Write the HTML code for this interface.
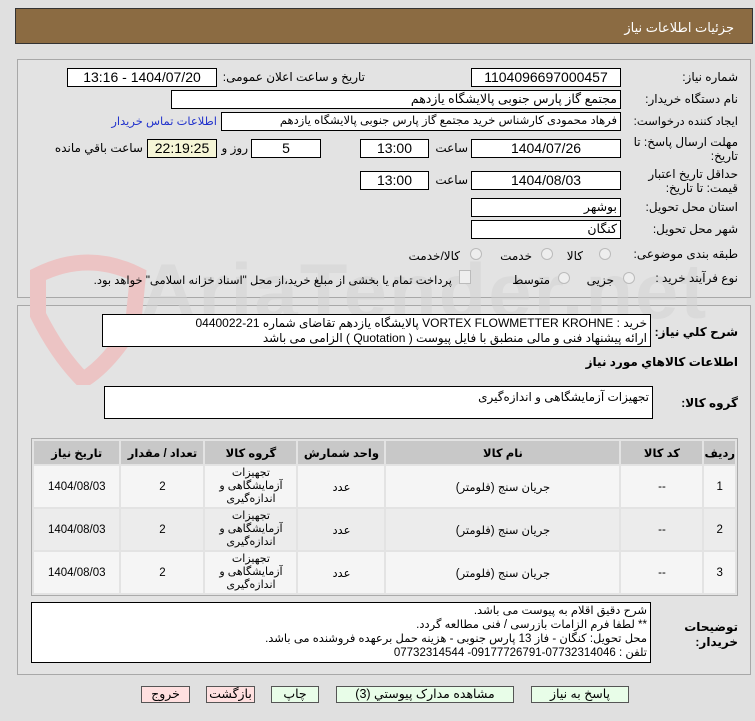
<!DOCTYPE html>
<html><head><meta charset="utf-8">
<style>
*{box-sizing:border-box;margin:0;padding:0}
body{width:755px;height:721px;background:#e0e0e0;font-family:"Liberation Sans","Noto Sans CJK SC","DejaVu Sans",sans-serif;font-size:12px;color:#000;position:relative;overflow:hidden;direction:rtl}
.a{position:absolute;white-space:nowrap}
.hdr{left:15px;top:8px;width:738px;height:36px;background:#8b6b42;border:1px solid #333;color:#fff;font-size:13px;padding:11px 18px 0 0}
.pan{border:1px solid #a8a8a8;background:#e3e3e3}
.f{background:#fff;border:1px solid #000;height:19px;line-height:17px;padding:0 3px;font-size:12.5px}
.n{font-size:14px}
.c{text-align:center}
.lb{font-size:12px}
.rad{width:12px;height:12px;border:1px solid #bbb;border-radius:50%;background:#eee}
table{border-collapse:separate;border-spacing:2px;font-size:11.5px}
td,th{text-align:center}
th{background:#c8c8c8;height:23px;font-weight:bold}
td{background:#f5f5f5}
tr.e td{background:#ececec}
.btn{border:1px solid #555;height:17px;line-height:15px;text-align:center;font-size:12.5px}
.g{background:#e8fde8}.r{background:#ffe0e0}
</style></head><body>
<div class="a hdr">جزئیات اطلاعات نیاز</div>
<div class="a pan" style="left:17px;top:59px;width:734px;height:239px"></div>
<div class="a pan" style="left:17px;top:305px;width:734px;height:370px"></div>
<svg class="a" style="left:18px;top:245px" width="140" height="140" viewBox="0 0 140 140"><path d="M20 30 Q70 5 120 30 L115 80 Q90 120 65 135 Q40 110 20 70 Z" fill="none" stroke="#ecc4c4" stroke-width="16"/></svg>
<div class="a" style="left:140px;top:246px;font-size:78px;font-weight:bold;color:#d2d2d2;direction:ltr;letter-spacing:2px;opacity:.5">AriaTender.net</div>

<div class="a lb" style="right:17px;top:70px">شماره نیاز:</div>
<div class="a f c n" style="left:471px;top:68px;width:150px">1104096697000457</div>
<div class="a lb" style="right:390px;top:70px">تاریخ و ساعت اعلان عمومی:</div>
<div class="a f c n" style="left:67px;top:68px;width:150px">1404/07/20 - 13:16</div>

<div class="a lb" style="right:17px;top:92px">نام دستگاه خریدار:</div>
<div class="a f" style="left:171px;top:90px;width:450px">مجتمع گاز پارس جنوبی  پالایشگاه یازدهم</div>

<div class="a lb" style="right:17px;top:114px;font-size:11.5px">ایجاد کننده درخواست:</div>
<div class="a f" style="left:221px;top:112px;width:400px;font-size:11.5px;overflow:hidden">فرهاد محمودی کارشناس خرید مجتمع گاز پارس جنوبی  پالایشگاه یازدهم</div>
<div class="a lb" style="right:538px;top:114px;color:#2233cc;font-size:11.5px">اطلاعات تماس خریدار</div>

<div class="a lb" style="right:17px;top:135px;line-height:14px;white-space:normal;width:112px">مهلت ارسال پاسخ: تا تاریخ:</div>
<div class="a f c n" style="left:471px;top:139px;width:150px">1404/07/26</div>
<div class="a lb" style="right:287px;top:141px">ساعت</div>
<div class="a f c n" style="left:360px;top:139px;width:69px">13:00</div>
<div class="a f c n" style="left:251px;top:139px;width:70px">5</div>
<div class="a lb" style="right:507px;top:141px">روز و</div>
<div class="a f c n" style="left:147px;top:139px;width:70px;background:#f5f5d6">22:19:25</div>
<div class="a lb" style="right:612px;top:141px">ساعت باقي مانده</div>

<div class="a lb" style="right:17px;top:167px;line-height:14px;white-space:normal;width:100px">حداقل تاریخ اعتبار قیمت: تا تاریخ:</div>
<div class="a f c n" style="left:471px;top:171px;width:150px">1404/08/03</div>
<div class="a lb" style="right:287px;top:173px">ساعت</div>
<div class="a f c n" style="left:360px;top:171px;width:69px">13:00</div>

<div class="a lb" style="right:17px;top:200px">استان محل تحویل:</div>
<div class="a f" style="left:471px;top:198px;width:150px">بوشهر</div>
<div class="a lb" style="right:17px;top:222px">شهر محل تحویل:</div>
<div class="a f" style="left:471px;top:220px;width:150px">کنگان</div>

<div class="a lb" style="right:17px;top:247px">طبقه بندی موضوعی:</div>
<div class="a rad" style="left:599px;top:248px"></div><div class="a lb" style="right:172px;top:249px">کالا</div>
<div class="a rad" style="left:541px;top:248px"></div><div class="a lb" style="right:223px;top:249px">خدمت</div>
<div class="a rad" style="left:470px;top:248px"></div><div class="a lb" style="right:295px;top:249px">کالا/خدمت</div>

<div class="a lb" style="right:17px;top:271px">نوع فرآیند خرید :</div>
<div class="a rad" style="left:623px;top:272px"></div><div class="a lb" style="right:141px;top:273px">جزیی</div>
<div class="a rad" style="left:558px;top:272px"></div><div class="a lb" style="right:205px;top:273px">متوسط</div>
<div class="a" style="left:459px;top:270px;width:12px;height:14px;border:1px solid #bbb;background:#eee"></div>
<div class="a lb" style="right:303px;top:273px;font-size:11.5px">پرداخت تمام یا بخشی از مبلغ خرید،از محل "اسناد خزانه اسلامی" خواهد بود.</div>

<div class="a lb" style="right:17px;top:325px;font-weight:bold">شرح کلي نیاز:</div>
<div class="a f" style="left:102px;top:314px;width:549px;height:33px;line-height:15px;padding-top:1px;font-size:12px;overflow:hidden">خرید : VORTEX FLOWMETTER KROHNE  پالایشگاه یازدهم تقاضای شماره 21-0440022<br>ارائه پیشنهاد فنی و مالی منطبق با فایل پیوست ( Quotation ) الزامی می باشد</div>
<div class="a lb" style="right:17px;top:355px;font-weight:bold">اطلاعات کالاهاي مورد نیاز</div>
<div class="a lb" style="right:17px;top:396px;font-weight:bold">گروه کالا:</div>
<div class="a f" style="left:104px;top:386px;width:549px;height:33px;font-size:12px;padding-top:2px">تجهیزات آزمایشگاهی و اندازه‌گیری</div>

<div class="a" style="left:31px;top:438px;width:707px;height:158px;border:1px solid #aaa;background:#e3e3e3">
<table style="width:705px">
<tr><th style="width:26px">ردیف</th><th style="width:81px">کد کالا</th><th style="width:233px">نام کالا</th><th style="width:86px">واحد شمارش</th><th style="width:91px">گروه کالا</th><th style="width:82px">تعداد / مقدار</th><th>تاریخ نیاز</th></tr>
<tr style="height:41px"><td>1</td><td>--</td><td>جریان سنج (فلومتر)</td><td>عدد</td><td style="line-height:13px;font-size:11px">تجهیزات<br>آزمایشگاهی و<br>اندازه‌گیری</td><td>2</td><td>1404/08/03</td></tr>
<tr class="e" style="height:41px"><td>2</td><td>--</td><td>جریان سنج (فلومتر)</td><td>عدد</td><td style="line-height:13px;font-size:11px">تجهیزات<br>آزمایشگاهی و<br>اندازه‌گیری</td><td>2</td><td>1404/08/03</td></tr>
<tr style="height:41px"><td>3</td><td>--</td><td>جریان سنج (فلومتر)</td><td>عدد</td><td style="line-height:13px;font-size:11px">تجهیزات<br>آزمایشگاهی و<br>اندازه‌گیری</td><td>2</td><td>1404/08/03</td></tr>
</table></div>

<div class="a lb" style="right:17px;top:620px;font-weight:bold;line-height:15px">توضیحات<br>خریدار:</div>
<div class="a f" style="left:31px;top:602px;width:620px;height:61px;line-height:14px;font-size:11.5px;padding-top:1px">شرح دقیق اقلام به پیوست می باشد.<br>** لطفا فرم الزامات بازرسی / فنی مطالعه گردد.<br>محل تحویل: کنگان - فاز 13 پارس جنوبی - هزینه حمل برعهده فروشنده می باشد.<br>تلفن : 07732314046-09177726791- 07732314544</div>

<div class="a btn g" style="left:531px;top:686px;width:98px">پاسخ به نیاز</div>
<div class="a btn g" style="left:336px;top:686px;width:178px">مشاهده مدارک پیوستي (3)</div>
<div class="a btn g" style="left:271px;top:686px;width:48px">چاپ</div>
<div class="a btn r" style="left:206px;top:686px;width:49px">بازگشت</div>
<div class="a btn r" style="left:141px;top:686px;width:49px">خروج</div>
</body></html>
